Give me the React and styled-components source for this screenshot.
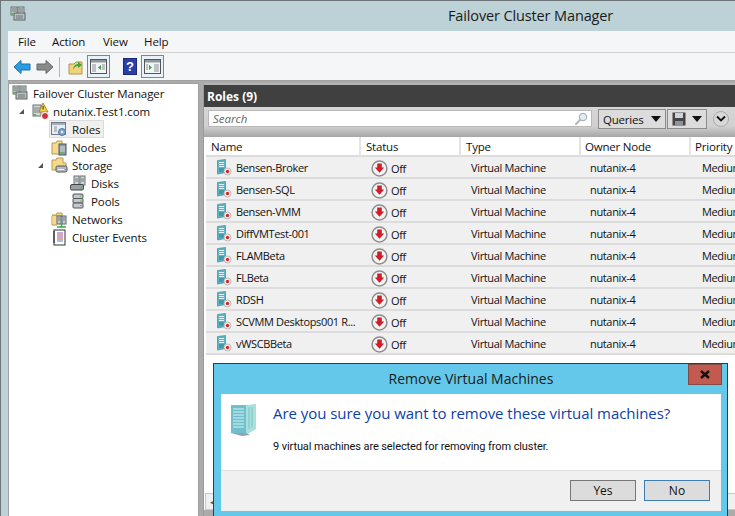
import React from "react";
import styled, { createGlobalStyle } from "styled-components";

const Global = createGlobalStyle`
  html, body { margin: 0; padding: 0; width: 735px; height: 516px; overflow: hidden; background: #bfd3d8; }
  body { font-family: "Open Sans", "Noto Sans", "Liberation Sans", sans-serif; color: #111; }
  * { box-sizing: border-box; }
`;

const Window = styled.div`
  position: relative; width: 735px; height: 516px; background: #bdd2d7;
  border-top: 1px solid #6d7578; border-left: 1px solid #6d7578;
  display: flex; flex-direction: column; overflow: hidden;
`;
const TitleBar = styled.div`
  height: 30px; display: flex; align-items: center; position: relative; padding: 0 0 4px 9px; flex: none;
`;
const TitleText = styled.div`
  position: absolute; left: 447px; top: 5px; font-size: 14.5px; line-height: 20px; letter-spacing: -0.13px; color: #1a1a1a;
`;
const Inner = styled.div`
  flex: 1; margin-left: 7px; display: flex; flex-direction: column; min-height: 0; background: #f0f0f0;
`;
const MenuBar = styled.div`
  height: 22px; background: #f5f6f7; display: flex; align-items: center; padding-left: 10px; flex: none;
  border-bottom: 1px solid #d0d0d0;
`;
const MenuItem = styled.span`font-size: 11.5px; letter-spacing: -0.1px; width: ${p => p.$w}px;`;
const Toolbar = styled.div`
  height: 28px; background: #f5f6f7; display: flex; align-items: center; padding-left: 5px; flex: none;
  border-bottom: 1px solid #a0a0a0;
`;
const NavGap = styled.span`width: 5px; flex: none;`;
const ToolBtn = styled.div`
  width: ${p => p.$w || 23}px; height: 23px; display: flex; align-items: center; justify-content: center; flex: none;
  border: 1px solid ${p => (p.$on ? "#3a9ad9" : "transparent")}; background: ${p => (p.$on ? "#e8f2f8" : "transparent")};
  margin-right: ${p => p.$mr || 0}px;
`;
const ToolSep = styled.div`width: 1px; height: 20px; background: #b5b5b5; margin: 0 4px 0 5px; flex: none;`;
const Body = styled.div`
  flex: 1; display: flex; min-height: 0; background: #ababab; padding-top: 2px; gap: 4px;
`;
const TreePanel = styled.div`
  width: 191px; background: #fff; border: 1px solid #a0a0a0; border-bottom: none; flex: none;
`;
const TreeRow = styled.div`
  height: 18px; display: flex; align-items: center; padding-left: ${p => p.$indent}px; font-size: 11.5px; letter-spacing: -0.09px; white-space: nowrap;
`;
const Arrow = styled.span`
  width: 0; height: 0; margin-right: 7px; border-style: solid; border-width: 0 0 5px 5px;
  border-color: transparent transparent #555 transparent; flex: none;
`;
const IconSlot = styled.span`
  width: 18px; height: 18px; margin-right: 4px; display: flex; align-items: center; justify-content: center; flex: none;
`;
const Selected = styled.span`
  display: inline-flex; align-items: center; width: 55px; height: 18px; background: #f0f0f0; border: 1px solid #dcdcdc;
`;
const Main = styled.div`
  flex: 1; min-width: 0; display: flex; flex-direction: column; background: #fff; border-top: 2px solid #b4b4b4; border-left: 1px solid #9a9a9a; overflow: hidden;
`;
const RolesHead = styled.div`
  height: 22px; background: #404040; color: #fff; font-weight: 700; font-size: 12px; display: flex; align-items: center; padding: 1px 0 0 3px; flex: none;
`;
const SearchRow = styled.div`
  height: 30px; flex: none; background: linear-gradient(#d6d6d6, #d0d0d0 65%, #a6a6a6); display: flex; align-items: flex-start; padding: 3px 0 0 4px;
`;
const SearchBox = styled.div`
  width: 384px; height: 17px; background: #fff; border: 1px solid #b8b8b8; display: flex; align-items: center; justify-content: space-between; padding: 0 3px 0 4px;
  font-size: 11.5px; font-style: italic; color: #666; margin-right: 6px; flex: none;
`;
const Drop = styled.div`
  height: 20px; width: ${p => p.$w}px; background: #dcdcdc; border: 1px solid #8c8c8c; display: flex; align-items: center; justify-content: space-between;
  padding: 0 4px; font-size: 11.5px; margin: -1px 1px 0 0; letter-spacing: -0.2px; flex: none;
`;
const Caret = styled.span`
  width: 0; height: 0; border-left: 5px solid transparent; border-right: 5px solid transparent; border-top: 6px solid #111; flex: none;
`;
const RoundBtn = styled.span`
  width: 16px; height: 16px; border-radius: 50%; background: #d8d8d8; border: 1px solid #aaa; margin: 1px 0 0 5px; display: flex; align-items: center; justify-content: center; flex: none;
`;
const Grid = styled.div`display: flex; flex-direction: column; width: 531px; padding-left: 2px; background: #fff; overflow: hidden;`;
const columns = "155px 100px 120px 110px 75px";
const HeadRow = styled.div`
  display: grid; grid-template-columns: ${columns}; height: 20px; background: #fff; border-bottom: 2px solid #dcdcdc; flex: none;
`;
const HeadCell = styled.div`
  font-size: 11.5px; letter-spacing: -0.2px; line-height: 19px; padding-left: ${p => p.$pad || 5}px; border-right: 2px solid #e4e4e4; white-space: nowrap;
`;
const Row = styled.div`
  display: grid; grid-template-columns: ${columns}; height: 22px; background: #f0f0f0; border-bottom: 2px solid #dcdcdc; align-items: center;
`;
const rowText = `font-size: 11px; letter-spacing: -0.35px; white-space: nowrap;`;
const NameCell = styled.div`display: flex; align-items: center; padding: 1px 0 0 11px; gap: 3px; overflow: hidden; ${rowText}`;
const StatusCell = styled.div`display: flex; align-items: center; padding: 2px 0 0 10px; gap: 3px; ${rowText}`;
const Cell = styled.div`padding: 1px 0 0 ${p => p.$pad || 10}px; ${rowText}`;

const Scrollbar = styled.div`
  position: absolute; left: 204px; top: 492px; width: 531px; height: 17px; background: #f0f0f0; border: 1px solid #c8c8c8; display: flex; align-items: center; padding-left: 4px; font-size: 9px; color: #555;
`;
const BottomStrip = styled.div`
  position: absolute; left: 203px; top: 509px; width: 532px; height: 7px; background: #ababab;
`;

const Dialog = styled.div`
  position: absolute; left: 212px; top: 362px; width: 515px; height: 154px; background: #63c8ea; border: 1px solid #2c3e46; border-bottom: none;
  padding: 0 6px 0 7px; display: flex; flex-direction: column;
`;
const DialogTitle = styled.div`
  height: 30px; flex: none; display: flex; align-items: center; justify-content: center; padding-bottom: 2px; font-size: 14px; letter-spacing: 0; color: #1a1a1a;
`;
const CloseBtn = styled.div`
  position: absolute; right: 5px; top: 0; width: 34px; height: 21px; background: #c25a50; border: 1px solid #7f4a45; display: flex; align-items: center; justify-content: center;
`;
const DialogBody = styled.div`
  height: 76px; flex: none; background: #fff; display: flex; padding: 9px 0 0 8px; gap: 16px;
`;
const DialogText = styled.div`display: flex; flex-direction: column;`;
const Question = styled.div`font-size: 15px; line-height: 20px; color: #0d3fa8; letter-spacing: -0.05px; white-space: nowrap;`;
const Detail = styled.div`font-family: Roboto, sans-serif; font-size: 11px; letter-spacing: -0.1px; line-height: 16px; margin-top: 16px; color: #111; white-space: nowrap;`;
const DialogFoot = styled.div`
  height: 41px; flex: none; background: #f0f0f0; border-top: 1px solid #dfdfdf; display: flex; justify-content: flex-end; align-items: center; gap: 8px; padding: 0 11px 2px 0;
`;
const Btn = styled.div`
  width: 66px; height: 21px; background: #dcdcdc; border: 1px solid ${p => (p.$primary ? "#3d7fb5" : "#777")}; font-size: 12px; display: flex; align-items: center; justify-content: center;
`;
const Glyph = styled.svg`flex: none; display: block;`;

const ClusterIcon = () => (
  <Glyph width="16" height="16" viewBox="0 0 16 16">
    <rect x="1" y="1" width="6" height="8" fill="#c9d2cf" stroke="#6a7272" />
    <rect x="8" y="1" width="6" height="8" fill="#c9d2cf" stroke="#6a7272" />
    <rect x="4" y="7" width="11" height="7" fill="#b8bfc0" stroke="#5e6565" />
    <path d="M2 3h4M9 3h4M2 5h4M9 5h4M6 10h7M6 12h7" stroke="#6a7272" />
    <rect x="2" y="7" width="2" height="2" fill="#55b84a" />
  </Glyph>
);
const ClusterWarn = () => (
  <Glyph width="17" height="17" viewBox="0 0 17 17">
    <rect x="1" y="2" width="8" height="11" fill="#cfd6d4" stroke="#6a7272" />
    <path d="M2 5h6M2 7h6M2 9h6" stroke="#7a8282" />
    <rect x="2" y="11" width="2" height="2" fill="#55b84a" />
    <path d="M11 0l5 9h-9z" fill="#f4d34a" stroke="#a88a20" />
    <rect x="10.6" y="3" width="1" height="3.5" fill="#333" />
    <circle cx="13" cy="13" r="3.5" fill="#c9343d" stroke="#fff" />
  </Glyph>
);
const RolesIcon = () => (
  <Glyph width="16" height="16" viewBox="0 0 16 16">
    <rect x="0.5" y="1.5" width="14" height="12" fill="#e9edf0" stroke="#707a84" />
    <rect x="1" y="2" width="13" height="2" fill="#9fb0c0" />
    <path d="M3 6h3M3 8h3M3 10h3" stroke="#8a94a0" />
    <circle cx="11" cy="11" r="3.5" fill="#7ea6cf" stroke="#4f78a4" />
    <circle cx="11" cy="11" r="1.2" fill="#e8f0f8" />
  </Glyph>
);
const FolderServer = () => (
  <Glyph width="17" height="17" viewBox="0 0 17 17">
    <path d="M1 4h4l1-2h5v3h-1v10H1z" fill="#f5d98e" stroke="#b89a4e" />
    <rect x="8" y="5" width="7" height="11" fill="#8b98a0" stroke="#4c5a64" />
    <path d="M9 8h5M9 10h5M9 12h5" stroke="#d6dde0" />
    <rect x="10" y="13.5" width="2" height="2" fill="#49c24a" />
  </Glyph>
);
const FolderDisk = () => (
  <Glyph width="17" height="17" viewBox="0 0 17 17">
    <path d="M1 3h4l1-2h6v5h3v7H1z" fill="#f5d98e" stroke="#b89a4e" />
    <rect x="5" y="9" width="11" height="6" rx="1.5" fill="#b4babf" stroke="#555" />
    <rect x="7" y="12" width="6" height="1" fill="#eee" />
    <rect x="14" y="12" width="1" height="1" fill="#49c24a" />
  </Glyph>
);
const DisksIcon = () => (
  <Glyph width="16" height="16" viewBox="0 0 16 16">
    <rect x="4" y="1" width="5" height="9" fill="#ced5d8" stroke="#6a7272" />
    <rect x="10" y="1" width="5" height="9" fill="#ced5d8" stroke="#6a7272" />
    <path d="M5 4h3M11 4h3M5 6h3M11 6h3" stroke="#778" />
    <rect x="0.5" y="9.5" width="13" height="5.5" rx="1.5" fill="#9aa1a6" stroke="#444" />
    <rect x="10" y="12" width="2" height="1.5" fill="#49c24a" />
  </Glyph>
);
const PoolsIcon = () => (
  <Glyph width="14" height="16" viewBox="0 0 14 16">
    <rect x="2" y="1" width="10" height="4.5" rx="1" fill="#c4c9cc" stroke="#555" />
    <rect x="2" y="5.5" width="10" height="4.5" rx="1" fill="#c4c9cc" stroke="#555" />
    <rect x="2" y="10" width="10" height="5" rx="1" fill="#c4c9cc" stroke="#555" />
    <path d="M9 3h1.5M9 8h1.5M9 12.5h1.5" stroke="#49c24a" />
  </Glyph>
);
const FolderNet = () => (
  <Glyph width="17" height="17" viewBox="0 0 17 17">
    <path d="M1 4h4l1-2h5v3H1v9h5" fill="#f5d98e" stroke="#b89a4e" />
    <rect x="1.5" y="5" width="6" height="8" fill="#f5d98e" />
    <rect x="6" y="5" width="4" height="8" fill="#c7ced2" stroke="#5b666c" />
    <rect x="11" y="5" width="4" height="8" fill="#c7ced2" stroke="#5b666c" />
    <path d="M7 7h2M12 7h2M7 9h2M12 9h2" stroke="#777" />
    <path d="M10.5 13v3M6 16h9" stroke="#2eaa3e" strokeWidth="1.4" />
  </Glyph>
);
const EventsIcon = () => (
  <Glyph width="14" height="17" viewBox="0 0 14 17">
    <rect x="2" y="1" width="11" height="15" fill="#fff" stroke="#333" />
    <path d="M1 3h2M1 5h2M1 7h2M1 9h2M1 11h2M1 13h2" stroke="#222" />
    <path d="M5 4h6" stroke="#7a5cc0" />
    <path d="M5 6h6" stroke="#d04a4a" />
    <path d="M5 8h6" stroke="#7a5cc0" />
    <path d="M5 10h6" stroke="#d04a4a" />
    <path d="M5 12h6" stroke="#5a7ac0" />
  </Glyph>
);
const BackIcon = ({ fill = "#2c9cdf", edge = "#1670b5", flip }) => (
  <Glyph width="18" height="16" viewBox="0 0 18 16">
    <path transform={flip ? "matrix(-1 0 0 1 18 0)" : undefined} d="M1 8l7-6.5V5h9v6H8v3.5z" fill={fill} stroke={edge} />
  </Glyph>
);
const UpIcon = () => (
  <Glyph width="16" height="16" viewBox="0 0 16 16">
    <path d="M1 5h5l2-2h6v12H1z" fill="#f1d27f" stroke="#b2954a" />
    <path d="M5 11c0-4 3-6 5-6V2.5L14 6l-4 3V7c-2 0-4 1-5 4z" fill="#3fa63a" />
  </Glyph>
);
const PaneIcon = ({ right }) => (
  <Glyph width="17" height="15" viewBox="0 0 17 15">
    <rect x="0.5" y="0.5" width="16" height="14" fill="#f2f5f7" stroke="#555" />
    <rect x="1" y="1" width="15" height="2.5" fill="#8f979e" />
    {right ? <path d="M5 6l3 2.5L5 11z" fill="#37a537" /> : <path d="M11 6L8 8.5l3 2.5z" fill="#37a537" />}
    {right ? <path d="M2 6h2M2 8h2M2 10h2M10 6h5M10 8h5M10 10h5M10 12h5" stroke="#8a8f95" /> : <path d="M2 6h4M2 8h4M2 10h4M2 12h4M12 6h3M12 8h3M12 10h3" stroke="#8a8f95" />}
  </Glyph>
);
const HelpIcon = () => (
  <Glyph width="14" height="17" viewBox="0 0 14 17">
    <rect x="0.5" y="0.5" width="13" height="16" fill="#2b3fa8" stroke="#1b2a78" />
    <text x="7" y="13" textAnchor="middle" fontSize="13" fontWeight="700" fill="#fff" fontFamily="Liberation Sans">?</text>
  </Glyph>
);
const Magnifier = () => (
  <Glyph width="14" height="14" viewBox="0 0 14 14">
    <circle cx="9" cy="5" r="3.6" fill="#e4edf2" stroke="#aab4ba" strokeWidth="1.3" />
    <path d="M6 8l-4 4" stroke="#b8b8b8" strokeWidth="2.2" strokeLinecap="round" />
  </Glyph>
);
const SaveIcon = () => (
  <Glyph width="14" height="14" viewBox="0 0 14 14">
    <path d="M0.5 0.5h13v13h-13z" fill="#444" />
    <rect x="3" y="1" width="8" height="5" fill="#cfd3d6" />
    <rect x="3" y="9" width="8" height="4.5" fill="#8e9498" />
  </Glyph>
);
const Chevron = () => (
  <Glyph width="10" height="8" viewBox="0 0 10 8">
    <path d="M1 1.5l4 4 4-4" fill="none" stroke="#111" strokeWidth="1.8" />
  </Glyph>
);
const VmIcon = () => (
  <Glyph width="16" height="17" viewBox="0 0 16 17">
    <path d="M0.5 1.5l8-1v13l-8 1.5z" fill="#5fb4c4" stroke="#3d8d9c" strokeWidth="0.7" />
    <path d="M2 3.5h5M2 5.5h5M2 7.5h5" stroke="#dff2f5" />
    <path d="M2 10h5M2 12h5" stroke="#2e7d8e" />
    <circle cx="10.5" cy="12.5" r="3.5" fill="#f4f4f4" stroke="#b9b9b9" />
    <circle cx="10.5" cy="12.5" r="1.7" fill="#d22" />
  </Glyph>
);
const OffIcon = () => (
  <Glyph width="17" height="17" viewBox="0 0 17 17">
    <circle cx="8.5" cy="8.5" r="7.4" fill="#f6f3f3" stroke="#8d8d8d" strokeWidth="1.5" />
    <path d="M6.2 3.6h4.6v4h2.4l-4.7 5.2-4.7-5.2h2.4z" fill="#cc1f2a" />
  </Glyph>
);
const ServerLarge = () => (
  <Glyph width="28" height="34" viewBox="0 0 28 34">
    <path d="M2 2h15v28H2z" fill="#6fc0cc" />
    <path d="M17 2l10-1v25l-10 6z" fill="#a7e0dc" />
    <path d="M4 6h11M4 9h11M4 12h11M4 15h11M4 18h11M4 21h11M4 24h11" stroke="#d8f2f4" />
    <path d="M20 4v22M23 4v20" stroke="#7cc4c4" />
    <path d="M2 30h15l4 2-8 1z" fill="#8ca4aa" />
  </Glyph>
);

const vms = ["Bensen-Broker", "Bensen-SQL", "Bensen-VMM", "DiffVMTest-001", "FLAMBeta", "FLBeta", "RDSH", "SCVMM Desktops001 R...", "vWSCBBeta"];

export default function App() {
  return (
    <>
      <Global />
      <Window>
        <TitleBar>
          <ClusterIcon />
          <TitleText>Failover Cluster Manager</TitleText>
        </TitleBar>
        <Inner>
          <MenuBar>
            <MenuItem $w={34}>File</MenuItem>
            <MenuItem $w={51}>Action</MenuItem>
            <MenuItem $w={41}>View</MenuItem>
            <MenuItem $w={40}>Help</MenuItem>
          </MenuBar>
          <Toolbar>
            <BackIcon />
            <NavGap />
            <BackIcon flip fill="#8b8b8b" edge="#666" />
            <ToolSep />
            <ToolBtn><UpIcon /></ToolBtn>
            <ToolBtn $on $mr={8}><PaneIcon /></ToolBtn>
            <ToolBtn><HelpIcon /></ToolBtn>
            <ToolBtn $on><PaneIcon right /></ToolBtn>
          </Toolbar>
          <Body>
            <TreePanel>
              <TreeRow $indent={2}><IconSlot><ClusterIcon /></IconSlot>Failover Cluster Manager</TreeRow>
              <TreeRow $indent={10}><Arrow /><IconSlot><ClusterWarn /></IconSlot>nutanix.Test1.com</TreeRow>
              <TreeRow $indent={40}><Selected><IconSlot><RolesIcon /></IconSlot>Roles</Selected></TreeRow>
              <TreeRow $indent={41}><IconSlot><FolderServer /></IconSlot>Nodes</TreeRow>
              <TreeRow $indent={29}><Arrow /><IconSlot><FolderDisk /></IconSlot>Storage</TreeRow>
              <TreeRow $indent={60}><IconSlot><DisksIcon /></IconSlot>Disks</TreeRow>
              <TreeRow $indent={60}><IconSlot><PoolsIcon /></IconSlot>Pools</TreeRow>
              <TreeRow $indent={41}><IconSlot><FolderNet /></IconSlot>Networks</TreeRow>
              <TreeRow $indent={41}><IconSlot><EventsIcon /></IconSlot>Cluster Events</TreeRow>
            </TreePanel>
            <Main>
              <RolesHead>Roles (9)</RolesHead>
              <SearchRow>
                <SearchBox>Search<Magnifier /></SearchBox>
                <Drop $w={68}>Queries<Caret /></Drop>
                <Drop $w={40}><SaveIcon /><Caret /></Drop>
                <RoundBtn><Chevron /></RoundBtn>
              </SearchRow>
              <Grid>
                <HeadRow>
                  <HeadCell>Name</HeadCell>
                  <HeadCell>Status</HeadCell>
                  <HeadCell>Type</HeadCell>
                  <HeadCell $pad={4}>Owner Node</HeadCell>
                  <HeadCell $pad={4}>Priority</HeadCell>
                </HeadRow>
                {vms.map(v => (
                  <Row key={v}>
                    <NameCell><VmIcon />{v}</NameCell>
                    <StatusCell><OffIcon />Off</StatusCell>
                    <Cell>Virtual Machine</Cell>
                    <Cell $pad={9}>nutanix-4</Cell>
                    <Cell $pad={11}>Medium</Cell>
                  </Row>
                ))}
              </Grid>
            </Main>
          </Body>
        </Inner>
        <Scrollbar>◀</Scrollbar>
        <BottomStrip />
        <Dialog>
          <DialogTitle>Remove Virtual Machines</DialogTitle>
          <CloseBtn>
            <svg width="10" height="9" viewBox="0 0 10 9"><path d="M1 1l8 7M9 1L1 8" stroke="#111" strokeWidth="2.4" /></svg>
          </CloseBtn>
          <DialogBody>
            <ServerLarge />
            <DialogText>
              <Question>Are you sure you want to remove these virtual machines?</Question>
              <Detail>9 virtual machines are selected for removing from cluster.</Detail>
            </DialogText>
          </DialogBody>
          <DialogFoot>
            <Btn>Yes</Btn>
            <Btn $primary>No</Btn>
          </DialogFoot>
        </Dialog>
      </Window>
    </>
  );
}
